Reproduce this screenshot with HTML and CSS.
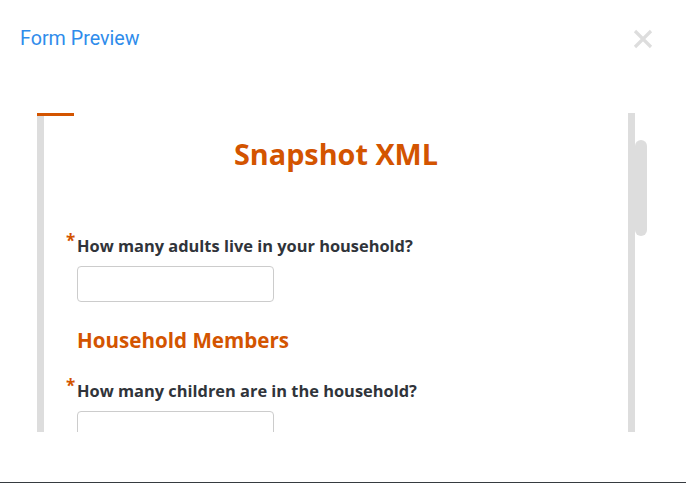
FILE: index.html
```
<!DOCTYPE html>
<html>
<head>
<meta charset="utf-8">
<link rel="stylesheet" href="styles.css">
</head>
<body>
<div class="modal">
  <header class="modal-header">
    <h1 class="modal-title">Form Preview</h1>
    <button class="close" aria-label="Close">
      <svg width="20" height="20" viewBox="0 0 20 20"><path d="M2 2 L18 18 M18 2 L2 18" stroke="#dddddd" stroke-width="3.2" fill="none"/></svg>
    </button>
  </header>
  <div class="modal-body">
    <div class="frame-wrap">
      <div class="frame">
        <h2 class="form-title">Snapshot XML</h2>
        <div class="question">
          <div class="q-head"><span class="req">*</span><label class="q-label">How many adults live in your household?</label></div>
          <input class="q-input" type="text">
        </div>
        <h3 class="section-title">Household Members</h3>
        <div class="question">
          <div class="q-head"><span class="req">*</span><label class="q-label">How many children are in the household?</label></div>
          <input class="q-input" type="text">
        </div>
      </div>
      <div class="thumb"></div>
    </div>
  </div>
</div>
</body>
</html>
```
FILE: styles.css
```
* { box-sizing: border-box; }
html, body { margin: 0; padding: 0; background: #fff; }
body { width: 686px; height: 483px; overflow: hidden; }
.modal {
  height: 483px;
  border-bottom: 1px solid #363b40;
  display: flex;
  flex-direction: column;
}
.modal-header {
  display: flex;
  justify-content: space-between;
  align-items: flex-start;
  padding: 27px 33px 0 20px;
  height: 113px;
}
.modal-title {
  margin: 0;
  font-family: Roboto, "Liberation Sans", sans-serif;
  font-weight: 400;
  font-size: 19.7px;
  line-height: 24px;
  color: #2f8ceb;
}
.close {
  border: 0;
  background: none;
  padding: 0;
  margin-top: 2px;
  width: 20px;
  height: 20px;
  display: block;
}
.close svg { display: block; }
.modal-body { padding-left: 37px; }
.frame-wrap { position: relative; width: 598px; }
.frame-wrap::before {
  content: "";
  position: absolute;
  left: 0;
  top: 0;
  width: 37px;
  height: 3px;
  background: #d35400;
  z-index: 1;
}
.frame {
  height: 319px;
  overflow: hidden;
  border-left: 7px solid #dddddd;
  border-right: 7px solid #dddddd;
  padding: 22px 0 0 22px;
  font-family: "Open Sans", "Liberation Sans", sans-serif;
}
.thumb {
  position: absolute;
  left: 100%;
  top: 27px;
  width: 12px;
  height: 96px;
  border-radius: 6px;
  background: #dddddd;
}
.form-title {
  margin: 0 0 62px -22px;
  text-align: center;
  font-size: 28.8px;
  line-height: 38px;
  font-weight: 700;
  color: #d35400;
}
.q-head { display: flex; align-items: flex-start; }
.req {
  width: 11px;
  color: #d35400;
  font-size: 17px;
  font-weight: 700;
  line-height: 17px;
  margin-top: -3px;
}
.q-label {
  font-size: 16.4px;
  line-height: 22px;
  font-weight: 700;
  color: #30343a;
}
.q-input {
  display: block;
  margin: 9px 0 0 11px;
  width: 197px;
  height: 36px;
  border: 1px solid #cccccc;
  border-radius: 4px;
  background: #fff;
}
.section-title {
  margin: 25px 0 26px 11px;
  font-size: 20.6px;
  line-height: 27px;
  font-weight: 700;
  color: #d35400;
}
```
